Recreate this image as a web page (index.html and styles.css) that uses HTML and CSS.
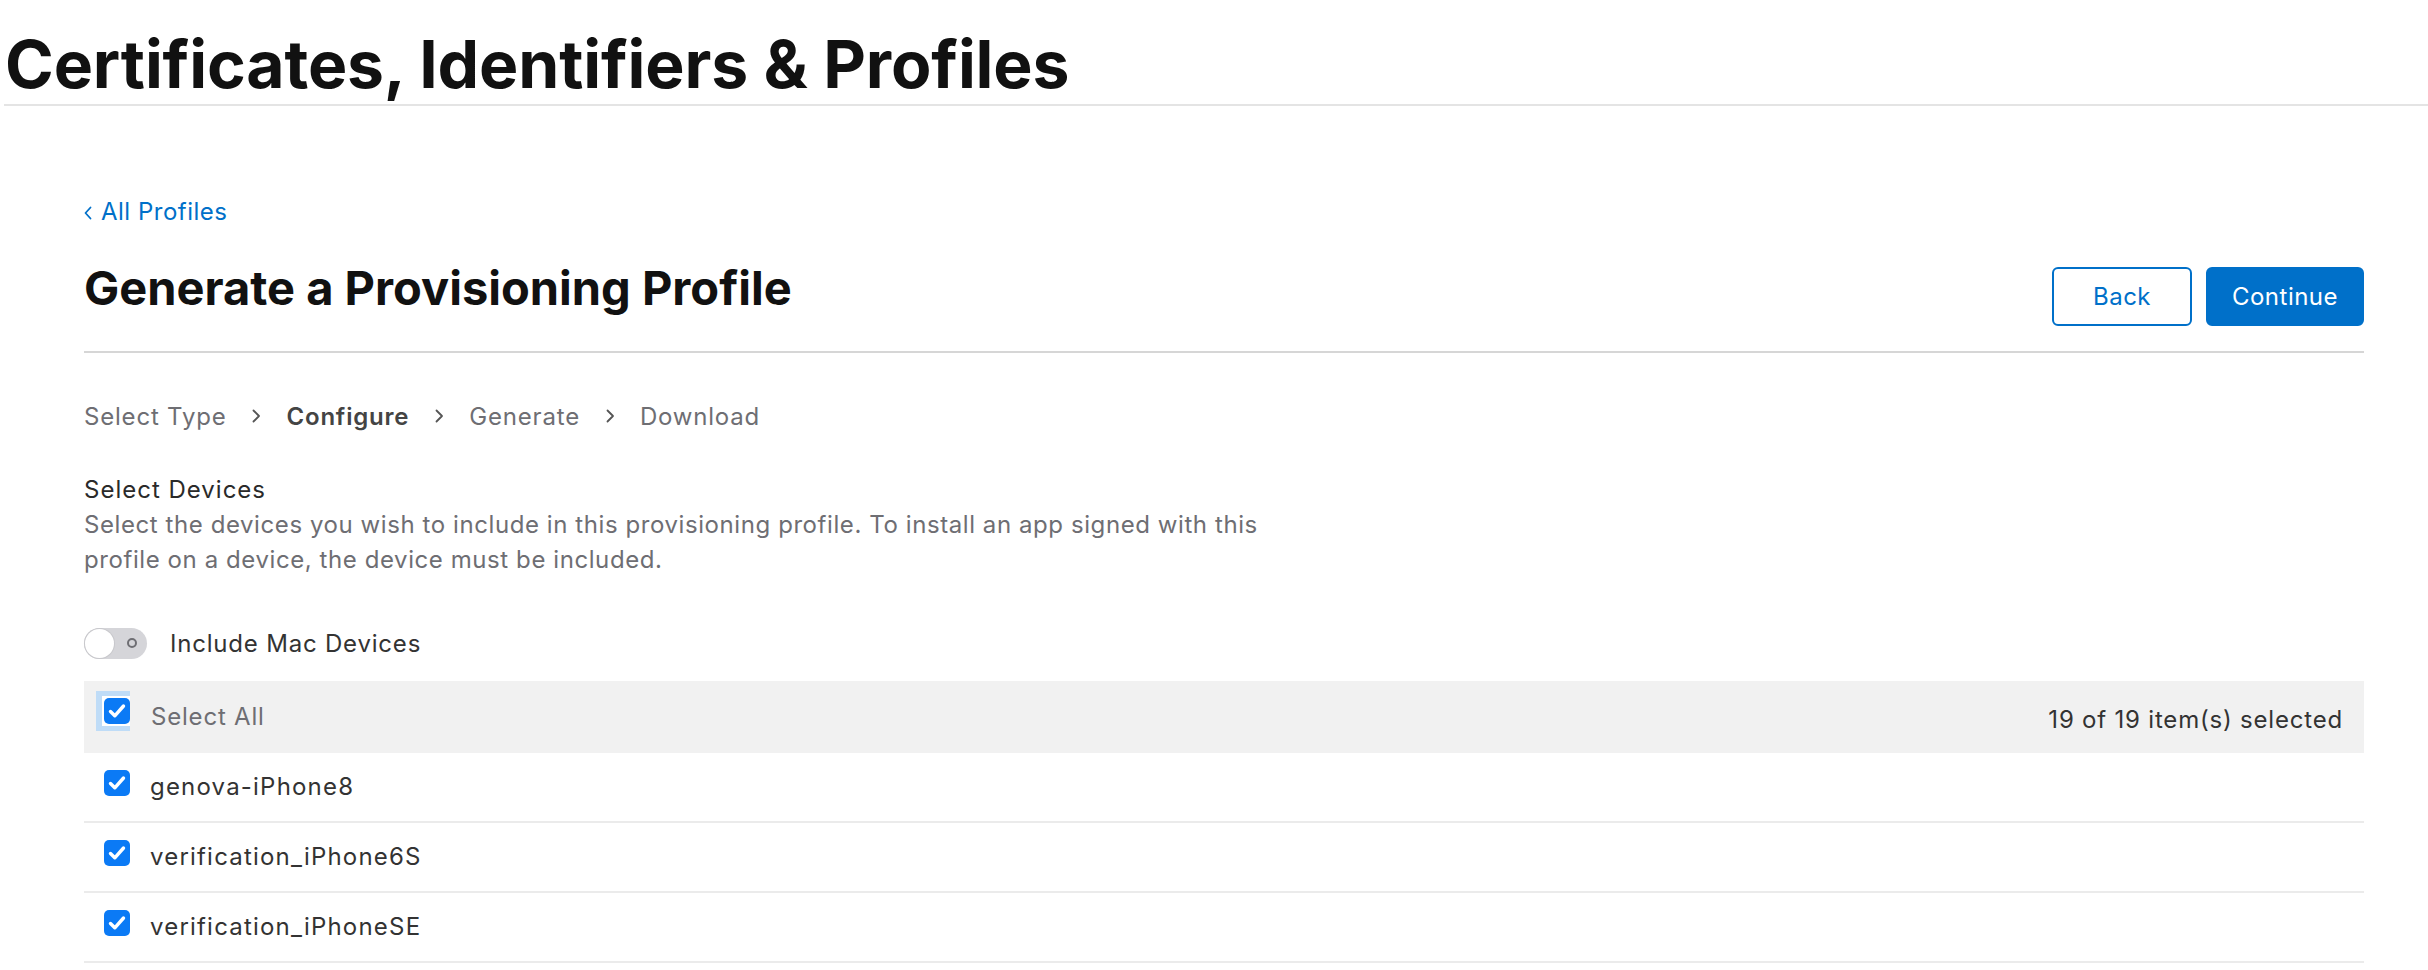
FILE: index.html
```html
<!DOCTYPE html>
<html lang="en">
<head>
<meta charset="utf-8">
<title>Certificates, Identifiers &amp; Profiles</title>
<link rel="stylesheet" href="styles.css">
</head>
<body>
<header class="site-header">
  <h1 class="site-title">Certificates, Identifiers &amp; Profiles</h1>
</header>
<main class="content">
  <a class="back-link" href="#">
    <svg class="back-chevron" width="8" height="14" viewBox="0 0 8 14"><path d="M6.5 1.5 L1.5 7 L6.5 12.5" fill="none" stroke="currentColor" stroke-width="1.8" stroke-linecap="round" stroke-linejoin="round"/></svg>
    <span>All Profiles</span>
  </a>
  <div class="title-row">
    <h2 class="page-title">Generate a Provisioning Profile</h2>
    <div class="actions">
      <button class="btn btn-secondary">Back</button>
      <button class="btn btn-primary">Continue</button>
    </div>
  </div>
  <div class="divider"></div>
  <nav class="steps">
    <span class="step">Select Type</span>
    <svg class="step-chevron" width="10" height="14" viewBox="0 0 10 14"><path d="M2.5 1.5 L8 7 L2.5 12.5" fill="none" stroke="currentColor" stroke-width="1.8" stroke-linecap="round" stroke-linejoin="round"/></svg>
    <span class="step step-current">Configure</span>
    <svg class="step-chevron" width="10" height="14" viewBox="0 0 10 14"><path d="M2.5 1.5 L8 7 L2.5 12.5" fill="none" stroke="currentColor" stroke-width="1.8" stroke-linecap="round" stroke-linejoin="round"/></svg>
    <span class="step">Generate</span>
    <svg class="step-chevron" width="10" height="14" viewBox="0 0 10 14"><path d="M2.5 1.5 L8 7 L2.5 12.5" fill="none" stroke="currentColor" stroke-width="1.8" stroke-linecap="round" stroke-linejoin="round"/></svg>
    <span class="step">Download</span>
  </nav>
  <section class="devices">
    <h3 class="section-title">Select Devices</h3>
    <p class="section-desc">Select the devices you wish to include in this provisioning profile. To install an app signed with this profile on a device, the device must be included.</p>
    <div class="toggle-row">
      <span class="toggle"><span class="toggle-knob"></span><span class="toggle-off"></span></span>
      <span class="toggle-label">Include Mac Devices</span>
    </div>
    <div class="device-table">
      <div class="table-head">
        <span class="focus-ring"><span class="focus-gap"><span class="checkbox"><svg width="26" height="26" viewBox="0 0 26 26"><path d="M6.5 13.5 L10.8 17.8 L19.5 8" fill="none" stroke="#fff" stroke-width="3.4" stroke-linecap="round" stroke-linejoin="round"/></svg></span></span></span>
        <span class="select-all">Select All</span>
        <span class="count">19 of 19 item(s) selected</span>
      </div>
      <div class="device-row">
        <span class="checkbox"><svg width="26" height="26" viewBox="0 0 26 26"><path d="M6.5 13.5 L10.8 17.8 L19.5 8" fill="none" stroke="#fff" stroke-width="3.4" stroke-linecap="round" stroke-linejoin="round"/></svg></span>
        <span class="device-name">genova-iPhone8</span>
      </div>
      <div class="device-row">
        <span class="checkbox"><svg width="26" height="26" viewBox="0 0 26 26"><path d="M6.5 13.5 L10.8 17.8 L19.5 8" fill="none" stroke="#fff" stroke-width="3.4" stroke-linecap="round" stroke-linejoin="round"/></svg></span>
        <span class="device-name">verification_iPhone6S</span>
      </div>
      <div class="device-row">
        <span class="checkbox"><svg width="26" height="26" viewBox="0 0 26 26"><path d="M6.5 13.5 L10.8 17.8 L19.5 8" fill="none" stroke="#fff" stroke-width="3.4" stroke-linecap="round" stroke-linejoin="round"/></svg></span>
        <span class="device-name">verification_iPhoneSE</span>
      </div>
    </div>
  </section>
</main>
</body>
</html>
```

FILE: styles.css
```css
* { box-sizing: border-box; }

html, body {
  margin: 0;
  padding: 0;
  background: #ffffff;
}

body {
  font-family: Inter, "Noto Sans", "Liberation Sans", sans-serif;
  color: #1d1d1f;
  font-size: 24px;
  line-height: 35px;
  letter-spacing: 0.8px;
  overflow: hidden;
}

.site-header {
  margin-left: 4px;
  padding: 31px 0 7px 1px;
  border-bottom: 2px solid #e4e4e4;
}

.site-title {
  margin: 0;
  font-size: 66px;
  line-height: 66px;
  font-weight: 700;
  letter-spacing: -0.15px;
  color: #111111;
}

.content {
  padding: 0 64px 0 84px;
}

.back-link {
  display: inline-flex;
  align-items: center;
  gap: 9px;
  margin-top: 90px;
  color: #0070c9;
  text-decoration: none;
  font-size: 24px;
  line-height: 32px;
  letter-spacing: 0.5px;
}

.back-chevron { margin-top: 1px; }

.title-row {
  display: flex;
  justify-content: space-between;
  align-items: baseline;
  margin-top: 29px;
}

.page-title {
  margin: 0;
  font-size: 47px;
  line-height: 59px;
  font-weight: 700;
  letter-spacing: 0;
  color: #111111;
}

.actions {
  display: flex;
  gap: 14px;
  align-items: baseline;
}

.btn {
  font-family: inherit;
  font-size: 24px;
  line-height: 55px;
  letter-spacing: 0.5px;
  height: 59px;
  border-radius: 6px;
  border: 2px solid #0070c9;
  cursor: pointer;
  padding: 0;
  text-align: center;
}

.btn-secondary {
  width: 140px;
  background: #ffffff;
  color: #0070c9;
}

.btn-primary {
  width: 158px;
  background: #0070c9;
  color: #ffffff;
}

.divider {
  height: 2px;
  background: #d6d6d6;
  margin-top: 25px;
}

.steps {
  display: flex;
  align-items: center;
  gap: 25px;
  margin-top: 46px;
  color: #6e6e73;
}

.step-current {
  font-weight: 600;
  color: #444444;
}

.step-chevron { color: #555555; }

.section-title {
  margin: 38px 0 0;
  font-size: 24px;
  line-height: 35px;
  font-weight: 400;
  letter-spacing: 1px;
  color: #2a2a2a;
}

.section-desc {
  margin: 0;
  max-width: 1215px;
  letter-spacing: 0.58px;
  color: #6e6e73;
}

.toggle-row {
  display: flex;
  align-items: center;
  gap: 23px;
  margin-top: 51px;
  height: 31px;
}

.toggle {
  display: inline-flex;
  align-items: center;
  width: 63px;
  height: 31px;
  border-radius: 16px;
  background: #d5d5d9;
}

.toggle-knob {
  width: 29px;
  height: 29px;
  margin-left: 1px;
  border-radius: 50%;
  background: #ffffff;
  box-shadow: 0 0 0 1px #c8c8cc;
}

.toggle-off {
  width: 10px;
  height: 10px;
  margin-left: 13px;
  border-radius: 50%;
  border: 2px solid #6e6e73;
}

.toggle-label {
  color: #333333;
}

.device-table {
  margin-top: 22px;
}

.table-head {
  display: flex;
  align-items: center;
  height: 72px;
  padding: 0 21px 0 12px;
  background: #f1f1f1;
}

.focus-ring {
  display: inline-flex;
  padding: 5px 0 5px 6px;
  margin-bottom: 11px;
  background: #bfdcf7;
}

.focus-gap {
  display: inline-flex;
  padding: 2px 0 2px 2px;
  background: #ffffff;
}

.checkbox {
  display: inline-flex;
  width: 26px;
  height: 26px;
  border-radius: 5px;
  background: #0b7af5;
  flex: none;
}

.select-all {
  margin-left: 21px;
  color: #6e6e73;
}

.count {
  margin-left: auto;
  padding-top: 6px;
  color: #333333;
}

.device-row {
  display: flex;
  align-items: center;
  height: 70px;
  padding: 0 20px;
  border-bottom: 2px solid #ebebeb;
}

.device-row .checkbox {
  margin-bottom: 8px;
}

.device-name {
  margin-left: 20px;
  letter-spacing: 1.2px;
  color: #333333;
}
```
